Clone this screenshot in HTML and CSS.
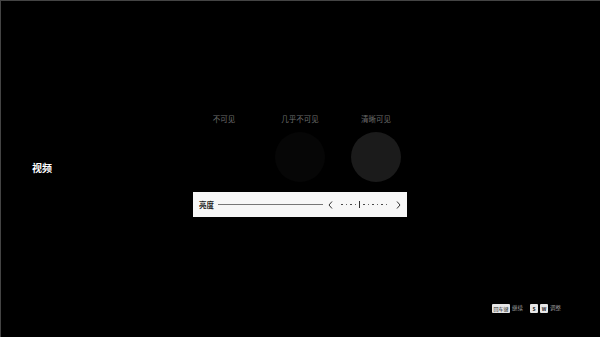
FILE: index.html
```html
<!DOCTYPE html>
<html lang="zh">
<head>
<meta charset="utf-8">
<title>视频</title>
<link rel="stylesheet" href="styles.css">
</head>
<body>
<div class="frame">
  <div class="stage">
    <div class="side">
      <h1 class="title">视频</h1>
    </div>
    <div class="main">
      <div class="options">
        <div class="option">
          <span class="opt-label">不可见</span>
          <span class="swatch swatch-none"></span>
        </div>
        <div class="option">
          <span class="opt-label">几乎不可见</span>
          <span class="swatch swatch-dim"></span>
        </div>
        <div class="option">
          <span class="opt-label">清晰可见</span>
          <span class="swatch swatch-clear"></span>
        </div>
      </div>
      <div class="panel">
        <span class="panel-label">亮度</span>
        <span class="panel-line"></span>
        <svg class="chev" width="5" height="8" viewBox="0 0 5 8"><polyline points="4,0.5 1,4 4,7.5" fill="none" stroke="#333" stroke-width="1"/></svg>
        <div class="dots">
          <span class="dot"></span><span class="dot"></span><span class="dot"></span><span class="dot"></span>
          <span class="tick"></span>
          <span class="dot"></span><span class="dot"></span><span class="dot"></span><span class="dot"></span><span class="dot"></span><span class="dot"></span>
        </div>
        <svg class="chev" width="5" height="8" viewBox="0 0 5 8"><polyline points="1,0.5 4,4 1,7.5" fill="none" stroke="#333" stroke-width="1"/></svg>
      </div>
    </div>
  </div>
  <div class="footer">
    <span class="key key-wide">回车键</span>
    <span class="hint">继续</span>
    <span class="key">S</span>
    <span class="key">W</span>
    <span class="hint">调整</span>
  </div>
</div>
</body>
</html>
```

FILE: styles.css
```css
html, body {
  margin: 0;
  padding: 0;
  background: #000;
}
body {
  width: 600px;
  height: 337px;
  overflow: hidden;
  font-family: "Noto Sans CJK SC", "Noto Sans", sans-serif;
}
.frame {
  box-sizing: border-box;
  width: 600px;
  height: 337px;
  border-top: 1px solid #444;
  border-left: 1px solid #444;
  display: flex;
  flex-direction: column;
}
.stage {
  flex: 1;
  display: flex;
}
.side {
  width: 192px;
  display: flex;
  align-items: center;
  padding-top: 31px;
}
.title {
  margin: 0 0 0 31px;
  font-size: 10px;
  font-weight: 700;
  color: #fff;
  line-height: 14px;
  white-space: nowrap;
}
.main {
  padding-top: 112px;
  display: flex;
  flex-direction: column;
}
.options {
  display: flex;
  margin-left: -7px;
}
.option {
  width: 76px;
  display: flex;
  flex-direction: column;
  align-items: center;
}
.opt-label {
  font-size: 7.5px;
  line-height: 12px;
  color: #6e6e6e;
  height: 12px;
  white-space: nowrap;
}
.swatch {
  margin-top: 7px;
  width: 50px;
  height: 50px;
  border-radius: 50%;
}
.swatch-none { background: #000; }
.swatch-dim { background: #060606; }
.swatch-clear { background: #1b1b1b; }
.panel {
  margin-top: 10px;
  width: 214px;
  height: 25px;
  box-sizing: border-box;
  background: #f7f7f7;
  display: flex;
  align-items: center;
  padding: 0 9px 0 6px;
}
.panel-label {
  flex-shrink: 0;
  white-space: nowrap;
  font-size: 7.5px;
  font-weight: 700;
  color: #222;
  line-height: 10px;
}
.panel-line {
  width: 105px;
  flex-shrink: 0;
  height: 1px;
  background: #777;
  margin: 0 5px 0 4px;
}
.chev {
  display: block;
  flex-shrink: 0;
}
.dots {
  display: flex;
  align-items: center;
  gap: 3px;
  margin: 0 9px 0 8px;
}
.dot {
  width: 1.5px;
  height: 1.5px;
  border-radius: 50%;
  background: #333;
}
.tick {
  width: 1px;
  height: 7px;
  background: #333;
}
.footer {
  height: 33px;
  display: flex;
  justify-content: flex-end;
  align-items: flex-start;
  padding-right: 34px;
  gap: 2px;
}
.key {
  box-sizing: border-box;
  height: 9px;
  min-width: 8px;
  padding: 0 1px;
  border-radius: 1px;
  background: #e6e6e6;
  color: #222;
  font-size: 5px;
  font-weight: 700;
  line-height: 9px;
  text-align: center;
  white-space: nowrap;
}
.key-wide {
  width: 18px;
  font-weight: 400;
}
.hint {
  font-size: 5.5px;
  color: #9a9a9a;
  line-height: 9px;
  margin-right: 5px;
  white-space: nowrap;
}
```
